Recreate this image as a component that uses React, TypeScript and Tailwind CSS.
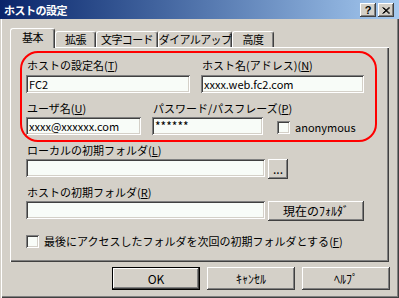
import React from 'react';

const raised =
  'bg-[#d4d0c8] shadow-[inset_-1px_-1px_0_#404040,inset_1px_1px_0_#ffffff,inset_-2px_-2px_0_#808080]';
const sunken =
  'bg-[#f8fcf8] shadow-[inset_1px_1px_0_#808080,inset_-1px_-1px_0_#ffffff,inset_2px_2px_0_#404040,inset_-2px_-2px_0_#d4d0c8]';

function Key({ k }: { k: string }) {
  return (
    <>
      (<u className="underline-offset-1">{k}</u>)
    </>
  );
}

function Label({ children, className = '' }: { children: React.ReactNode; className?: string }) {
  return <div className={`h-[14px] leading-[14px] pl-[1px] whitespace-nowrap ${className}`}>{children}</div>;
}

function Field({ value = '', className = '' }: { value?: string; className?: string }) {
  return (
    <div className={`h-[18px] px-[3px] leading-[18px] whitespace-nowrap overflow-hidden ${sunken} ${className}`}>
      {value}
    </div>
  );
}

function CheckBox() {
  return <div className={`w-[13px] h-[13px] shrink-0 ${sunken}`} />;
}

function Button({ children, className = '', isDefault = false }: { children: React.ReactNode; className?: string; isDefault?: boolean }) {
  return (
    <div
      className={`flex items-center justify-center text-[12px] ${raised} ${isDefault ? 'border border-black' : ''} ${className}`}
    >
      {children}
    </div>
  );
}

const tabs = [
  { label: '基本', w: 'w-[45px]' },
  { label: '拡張', w: 'w-[41px]' },
  { label: '文字コード', w: 'w-[62px]' },
  { label: 'ダイアルアップ', w: 'w-[74px]' },
  { label: '高度', w: 'w-[42px]' },
];

export default function App() {
  return (
    <div className="relative w-[399px] h-[298px] overflow-hidden bg-[#d4d0c8] text-[11px] text-black font-['Noto_Sans_CJK_JP','Noto_Sans',sans-serif] flex flex-col">
      {/* title bar */}
      <div className="h-[19px] shrink-0 flex items-center bg-gradient-to-r from-[#0a246a] to-[#a6caf0] pl-[4px] pr-[5px]">
        <span className="text-white font-bold leading-none tracking-[-0.5px] pt-[2px]">ホストの設定</span>
        <div className="ml-auto flex gap-[2px] pt-[1px]">
          <div className={`w-[16px] h-[14px] flex items-center justify-center ${raised}`}>
            <span className="text-[11px] font-bold leading-none font-['Liberation_Sans',sans-serif]">?</span>
          </div>
          <div className={`w-[16px] h-[14px] flex items-center justify-center ${raised}`}>
            <svg width="8" height="7" viewBox="0 0 8 7">
              <path d="M0.5 0.5 L7 6.5 M1.5 0.5 L8 6.5 M7 0.5 L0.5 6.5 M8 0.5 L1.5 6.5" stroke="#000" strokeWidth="1" />
            </svg>
          </div>
        </div>
      </div>

      {/* body */}
      <div className="flex-1 flex flex-col shadow-[inset_1px_0_0_#d4d0c8,inset_2px_0_0_#ffffff,inset_-1px_-1px_0_#404040,inset_-2px_-2px_0_#808080]">
        {/* tabs */}
        <div className="mt-[9px] ml-[10px] h-[20px] flex items-end">
          {tabs.map((t, i) => (
            <div
              key={t.label}
              className={`${t.w} flex items-center justify-center whitespace-nowrap tracking-[-0.6px] rounded-t-[3px] border-l border-t border-white bg-[#d4d0c8] shadow-[inset_-1px_0_0_#808080] border-r border-r-[#404040] ${
                i === 0 ? 'relative z-10 h-[20px] pb-[3px]' : 'h-[17px] pb-[1px]'
              }`}
            >
              {t.label}
            </div>
          ))}
        </div>

        {/* panel */}
        <div className="-mt-[1px] ml-[10px] w-[379px] h-[215px] pl-[16px] pt-[11px] shadow-[inset_1px_1px_0_#ffffff,inset_-1px_-1px_0_#404040,inset_-2px_-2px_0_#808080]">
          <div className="grid grid-cols-[164px_163px] gap-x-[11px]">
            <div>
              <Label className="mb-[3px]">
                ホストの設定名<Key k="T" />
              </Label>
              <Field value="FC2" />
            </div>
            <div>
              <Label className="mb-[3px]">
                ホスト名(アドレス)<Key k="N" />
              </Label>
              <Field value="xxxx.web.fc2.com" />
            </div>
          </div>

          <div className="mt-[8px] flex">
            <div className="w-[115px]">
              <Label className="mb-[2px]">
                ユーザ名<Key k="U" />
              </Label>
              <Field value="xxxx@xxxxxx.com" />
            </div>
            <div className="w-[111px] ml-[11px]">
              <Label className="mb-[2px]">
                パスワード/パスフレーズ<Key k="P" />
              </Label>
              <Field value="******" className="text-[12px]" />
            </div>
            <div className="ml-[14px] self-end mb-[1px] flex items-center gap-[5px]">
              <CheckBox />
              <span className="leading-[14px]">anonymous</span>
            </div>
          </div>

          <Label className="mt-[8px] mb-[2px]">
            ローカルの初期フォルダ<Key k="L" />
          </Label>
          <div className="flex items-start gap-[3px]">
            <Field className="w-[239px]" />
            <Button className="w-[20px] h-[20px]">...</Button>
          </div>

          <Label className="mt-[6px] mb-[2px]">
            ホストの初期フォルダ<Key k="R" />
          </Label>
          <div className="flex items-start gap-[3px]">
            <Field className="w-[239px]" />
            <Button className="w-[96px] h-[20px]">現在のﾌｫﾙﾀﾞ</Button>
          </div>

          <div className="mt-[13px] flex items-center gap-[5px]">
            <CheckBox />
            <span className="leading-[14px] whitespace-nowrap">
              最後にアクセスしたフォルダを次回の初期フォルダとする<Key k="F" />
            </span>
          </div>
        </div>

        {/* dialog buttons */}
        <div className="mt-[5px] flex justify-end gap-[7px] pr-[9px]">
          <Button isDefault className="w-[88px] h-[23px]">
            OK
          </Button>
          <Button className="w-[88px] h-[23px]">ｷｬﾝｾﾙ</Button>
          <Button className="w-[88px] h-[23px]">ﾍﾙﾌﾟ</Button>
        </div>
      </div>

      {/* red highlight drawn over the first two rows */}
      <div className="absolute left-[20px] top-[51px] w-[357px] h-[91px] rounded-[18px] border-2 border-[#ff0000] pointer-events-none" />
    </div>
  );
}
